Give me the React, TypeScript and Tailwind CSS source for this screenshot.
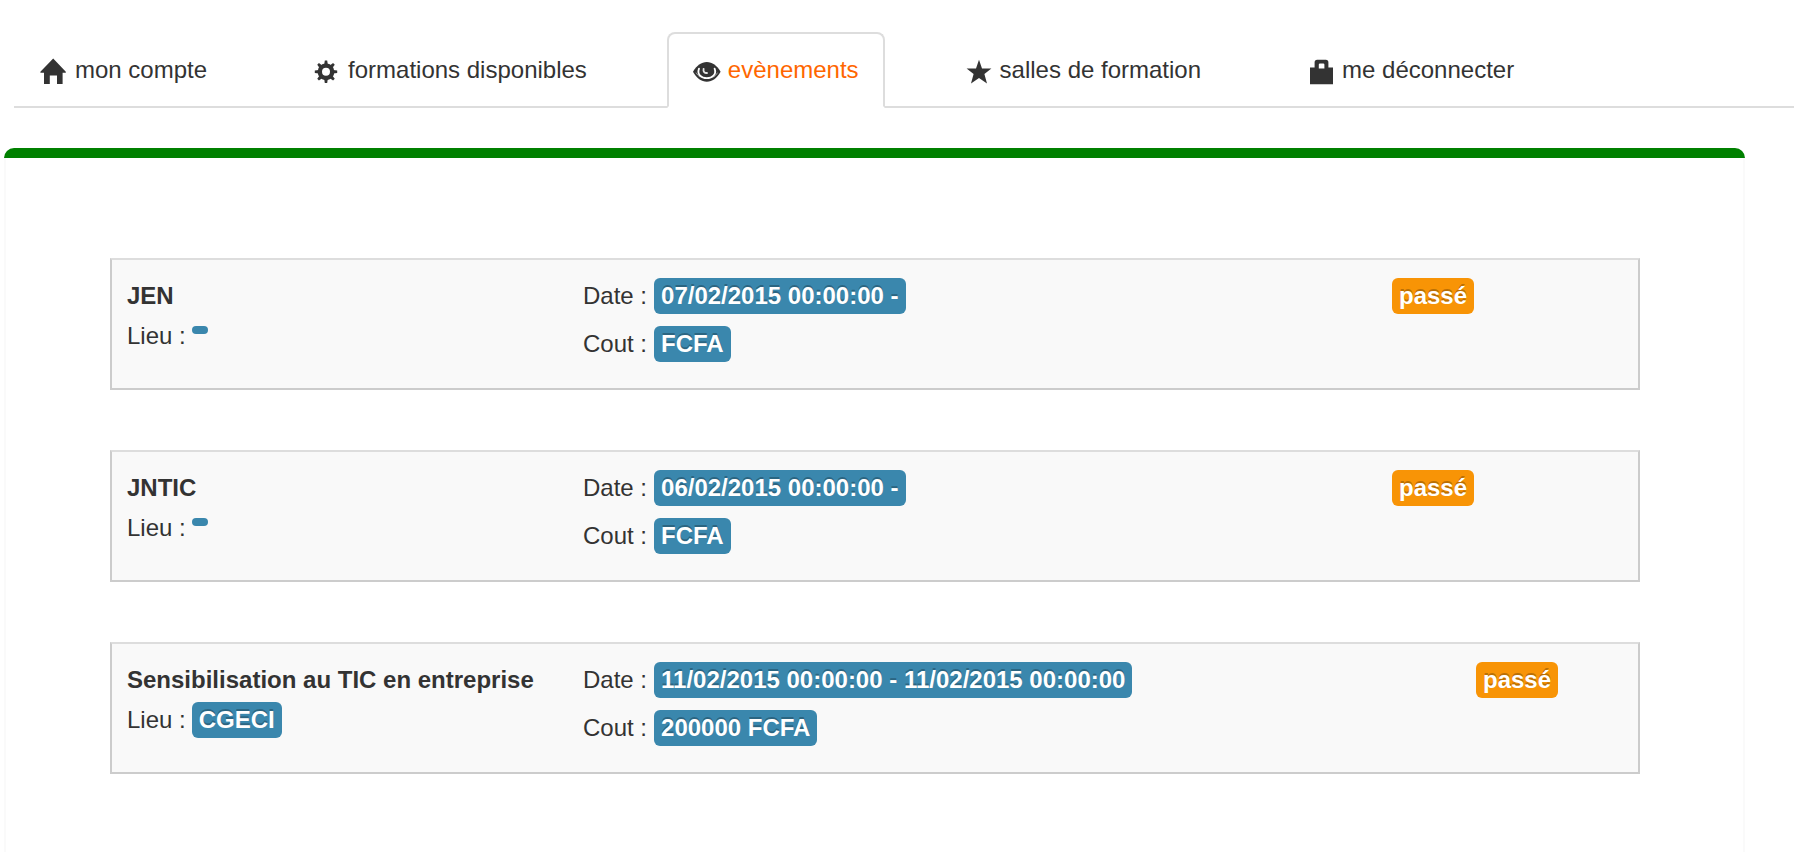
import type { ReactNode } from "react";

function Glyph({ children }: { children: ReactNode }) {
  return (
    <svg viewBox="0 0 14 14" className="size-7 shrink-0 translate-y-0.5 fill-[#333333]" aria-hidden="true">
      {children}
    </svg>
  );
}

const gearTeeth = [0, 45, 90, 135, 180, 225, 270, 315];

const tabs: { label: string; icon: ReactNode; active?: boolean }[] = [
  {
    label: "mon compte",
    icon: <path d="M6.6 .3 12.9 6.9V7.400H11.300V13H8.500V8.700H4.900V13H2V7.400H.2V6.900Z" />,
  },
  {
    label: "formations disponibles",
    icon: (
      <g>
        <circle cx="6.5" cy="6.9" r="3.1" fill="none" stroke="#333333" strokeWidth="2.200" />
        {gearTeeth.map((a) => (
          <path key={a} d="M5.600 3.300 5.900 1.300H7.100L7.400 3.300Z" transform={`rotate(${a} 6.5 6.9)`} />
        ))}
      </g>
    ),
  },
  {
    label: "evènements",
    active: true,
    icon: (
      <g>
        <path d="M0 6.900C1.800 3.700 4.200 2 6.900 2S12 3.700 13.800 6.900C12 10.200 9.600 11.900 6.900 11.900S1.800 10.200 0 6.900Z" />
        <path
          d="M3 5.300C1.900 8.300 4.200 10.100 6.900 10.100S11.900 8.300 10.800 5.300"
          fill="none"
          stroke="#ffffff"
          strokeWidth=".9"
          strokeLinecap="round"
        />
        <path d="M1.500 7.300Q2.300 8.700 3.500 9.500M12.300 7.300Q11.500 8.700 10.300 9.500" fill="none" stroke="#b5b5b5" strokeWidth=".4" />
        <path d="M5.300 5.400C5 6.900 5.800 7.600 7 7.500" fill="none" stroke="#e5e5e5" strokeWidth=".9" strokeLinecap="round" />
      </g>
    ),
  },
  {
    label: "salles de formation",
    icon: <path d="M7 .9 8.500 5.200H13.200L9.700 8 11 12.700 7 10 3 12.700 4.300 8 .8 5.200H5.500Z" />,
  },
  {
    label: "me déconnecter",
    icon: (
      <path
        fillRule="evenodd"
        d="M3.800 4.800V2.200Q3.800 .9 5.100 .9H9.400Q10.700 .9 10.700 2.200V4.800H13V13.100H1.500V4.800ZM5.900 5.200H8.700V3.300Q8.700 2.700 8.100 2.700H6.500Q5.900 2.700 5.900 3.300Z"
      />
    ),
  },
];

const events = [
  { name: "JEN", place: "", date: "07/02/2015 00:00:00 -", cost: "FCFA", statusWidth: "w-[246px]" },
  { name: "JNTIC", place: "", date: "06/02/2015 00:00:00 -", cost: "FCFA", statusWidth: "w-[246px]" },
  {
    name: "Sensibilisation au TIC en entreprise",
    place: "CGECI",
    date: "11/02/2015 00:00:00 - 11/02/2015 00:00:00",
    cost: "200000 FCFA",
    statusWidth: "w-[162px]",
  },
];

function Label({ color, children }: { color: string; children: string }) {
  if (!children) return <span className={`mb-3 h-2 w-4 rounded ${color}`} />;
  return (
    <span
      className={`h-9 rounded-md px-[7px] leading-9 font-bold whitespace-nowrap text-white [text-shadow:0_-2px_0_rgba(0,0,0,0.25)] ${color}`}
    >
      {children}
    </span>
  );
}

export default function App() {
  return (
    <div className="flex min-h-screen flex-col bg-white pt-8 font-['Liberation_Sans',Arial,sans-serif] text-2xl text-[#333333]">
      <nav className="mr-5 ml-3.5 flex gap-[54px] border-b-2 border-[#dddddd]">
        {tabs.map((t) => (
          <a
            key={t.label}
            href="#"
            className={`-mb-0.5 flex h-[76px] items-center gap-[7px] rounded-t-lg border-2 px-6 whitespace-nowrap ${
              t.active ? "border-[#dddddd] border-b-white bg-white text-[#ff6600]" : "border-transparent"
            }`}
          >
            <Glyph>{t.icon}</Glyph>
            {t.label}
          </a>
        ))}
      </nav>
      <main className="mt-10 mr-[69px] ml-1 flex grow flex-col">
        <div className="h-2.5 rounded-t-[10px] bg-[#008000]" />
        <div className="flex grow flex-col gap-[60px] border-x-2 border-[#fafafa] pt-25 pr-[103px] pb-19 pl-26">
          {events.map((e) => (
            <article key={e.name} className="flex h-[132px] border-2 border-[#cccccc] border-t-[#dddddd] bg-[#f9f9f9] pl-[15px]">
              <section className="w-[456px] pt-4">
                <h2 className="h-10 leading-10 font-bold whitespace-nowrap">{e.name}</h2>
                <p className="flex h-10 items-center gap-1.5">
                  Lieu : <Label color="bg-[#3a87ad]">{e.place}</Label>
                </p>
              </section>
              <section className="flex grow flex-col gap-3 pt-[18px]">
                <p className="flex h-9 items-center gap-[7px]">
                  Date : <Label color="bg-[#3a87ad]">{e.date}</Label>
                </p>
                <p className="flex h-9 items-center gap-[7px]">
                  Cout : <Label color="bg-[#3a87ad]">{e.cost}</Label>
                </p>
              </section>
              <div className={`flex items-start pt-[18px] ${e.statusWidth}`}>
                <Label color="bg-[#f89406]">passé</Label>
              </div>
            </article>
          ))}
        </div>
      </main>
    </div>
  );
}
